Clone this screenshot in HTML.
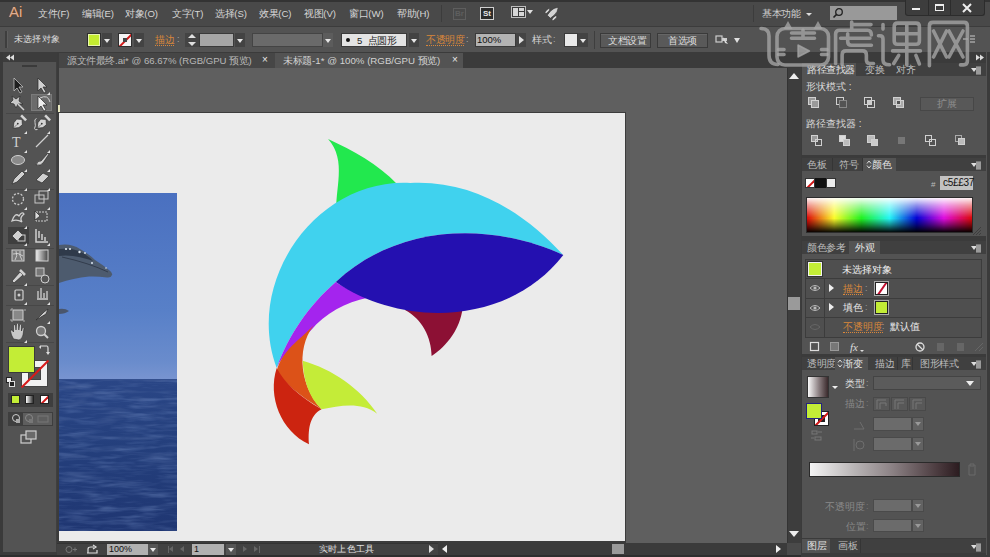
<!DOCTYPE html>
<html><head><meta charset="utf-8">
<style>
*{margin:0;padding:0;box-sizing:border-box}
html,body{width:990px;height:557px;overflow:hidden;background:#3b3b3b;font-family:"Liberation Sans",sans-serif;font-size:10px;color:#d8d8d8}
.a{position:absolute}
.t{position:absolute;white-space:nowrap;line-height:1;font-size:10px;color:#d6d6d6}
.dd{position:absolute;background:#434343}
.dd::after{content:"";position:absolute;left:50%;top:50%;margin-left:-3px;margin-top:-1.5px;border-left:3px solid transparent;border-right:3px solid transparent;border-top:4px solid #e6e6e6}
.tri-r{position:absolute;width:0;height:0;border-top:4px solid transparent;border-bottom:4px solid transparent;border-left:5px solid #e0e0e0}
.tri-l{position:absolute;width:0;height:0;border-top:4px solid transparent;border-bottom:4px solid transparent;border-right:5px solid #e0e0e0}
.tri-u{position:absolute;width:0;height:0;border-left:4px solid transparent;border-right:4px solid transparent;border-bottom:5px solid #e0e0e0}
.tri-d{position:absolute;width:0;height:0;border-left:4px solid transparent;border-right:4px solid transparent;border-top:5px solid #e0e0e0}
.or{color:#d9873a}
.btn{position:absolute;background:#595959;border:1px solid #3a3a3a;box-shadow:inset 0 1px 0 #666}
.ph{position:absolute;background:#3a3a3a}
.panel{position:absolute;background:#535353}
.tab{position:absolute;height:13px;font-size:10px;line-height:13px;color:#bdbdbd;white-space:nowrap;padding-left:5px}
.tab.on{background:#535353;color:#e4e4e4}
.pm{position:absolute;width:9px;height:7px}
.pm::before{content:"";position:absolute;left:0;top:2px;border-left:3px solid transparent;border-right:3px solid transparent;border-top:4px solid #ddd}
.pm::after{content:"";position:absolute;left:5px;top:0;width:5px;height:7px;background:#9a9a9a;border-top:1px solid #777;border-bottom:1px solid #777}
.c{display:inline-block;width:1em;text-align:center;font-style:normal}
</style></head><body>
<!-- MENU BAR -->
<div class="a" style="left:0;top:0;width:990px;height:26px;background:#494949;border-top:2px solid #333"></div>
<div class="t" style="left:9px;top:4px;font-size:15px;color:#dcae92;letter-spacing:0px;text-shadow:0 0 1px #7a4020,0 0 1px #7a4020">Ai</div>
<div class="t" style="left:38px;top:9px;font-size:9.6px"><i class="c">文</i><i class="c">件</i>(F)</div>
<div class="t" style="left:82px;top:9px;font-size:9.6px"><i class="c">编</i><i class="c">辑</i>(E)</div>
<div class="t" style="left:125px;top:9px;font-size:9.6px"><i class="c">对</i><i class="c">象</i>(O)</div>
<div class="t" style="left:172px;top:9px;font-size:9.6px"><i class="c">文</i><i class="c">字</i>(T)</div>
<div class="t" style="left:215px;top:9px;font-size:9.6px"><i class="c">选</i><i class="c">择</i>(S)</div>
<div class="t" style="left:259px;top:9px;font-size:9.6px"><i class="c">效</i><i class="c">果</i>(C)</div>
<div class="t" style="left:304px;top:9px;font-size:9.6px"><i class="c">视</i><i class="c">图</i>(V)</div>
<div class="t" style="left:349px;top:9px;font-size:9.6px"><i class="c">窗</i><i class="c">口</i>(W)</div>
<div class="t" style="left:397px;top:9px;font-size:9.6px"><i class="c">帮</i><i class="c">助</i>(H)</div>
<div class="a" style="left:441px;top:5px;width:1px;height:17px;background:#3c3c3c"></div>
<div class="a" style="left:453px;top:8px;width:13px;height:12px;border:1px solid #5e5e5e;color:#5e5e5e;font-size:8px;line-height:10px;text-align:center;font-weight:bold">Br</div>
<div class="a" style="left:480px;top:7px;width:14px;height:13px;border:1px solid #cfcfcf;background:#2c2c2c;color:#e6e6e6;font-size:8px;line-height:11px;text-align:center;font-weight:bold">St</div>
<div class="a" style="left:511px;top:6px;width:15px;height:12px;border:1px solid #bdbdbd;background:#3a3a3a"><div class="a" style="left:1px;top:1px;width:5px;height:8px;background:#d6d6d6"></div><div class="a" style="left:7px;top:1px;width:5px;height:3px;background:#d6d6d6"></div><div class="a" style="left:7px;top:5px;width:5px;height:4px;background:#d6d6d6"></div></div>
<div class="tri-d" style="left:527px;top:10px;border-width:4px 3px 0 3px"></div>
<svg class="a" style="left:540px;top:3px" width="22" height="20" viewBox="540 3 22 20"><g transform="translate(553 12.5) rotate(45)" fill="#d2d2d2" stroke="#2a2a2a" stroke-width="0.6"><path d="M0 -7.5 Q3 -4 2.8 1 L2.2 6 L-2.2 6 L-2.8 1 Q-3 -4 0 -7.5 Z"/><ellipse cx="-5" cy="3" rx="1.3" ry="3.2"/><ellipse cx="5" cy="3" rx="1.3" ry="3.2"/></g></svg>
<div class="a" style="left:753px;top:5px;width:1px;height:17px;background:#3c3c3c"></div>
<div class="t" style="left:762px;top:9px;font-size:9.5px;color:#cfcfcf"><i class="c">基</i><i class="c">本</i><i class="c">功</i><i class="c">能</i></div>
<div class="tri-d" style="left:806px;top:13px;border-width:3px 3px 0 3px;border-top-color:#ddd"></div>
<div class="a" style="left:830px;top:6px;width:67px;height:14px;background:#999"></div>
<svg class="a" style="left:832px;top:7px" width="12" height="12" viewBox="0 0 12 12"><circle cx="7" cy="5" r="3.3" fill="none" stroke="#222" stroke-width="1.3"/><path d="M4.6 7.4 L1.5 10.5" stroke="#222" stroke-width="1.6"/></svg>
<div class="a" style="left:905px;top:0;width:80px;height:16px;background:#3d3d3d;border:1px solid #2c2c2c;border-top:none;border-radius:0 0 3px 3px"></div>
<div class="a" style="left:928px;top:0;width:1px;height:15px;background:#2c2c2c"></div>
<div class="a" style="left:950px;top:0;width:1px;height:15px;background:#2c2c2c"></div>
<div class="a" style="left:912px;top:8px;width:8px;height:2px;background:#eee"></div>
<div class="a" style="left:935px;top:4px;width:9px;height:7px;border:1px solid #eee;border-top-width:2px"></div>
<svg class="a" style="left:962px;top:3px" width="10" height="10"><path d="M1 1 L9 9 M9 1 L1 9" stroke="#eee" stroke-width="2"/></svg>
<!-- CONTROL BAR -->
<div class="a" style="left:0;top:26px;width:990px;height:27px;background:#535353;border-top:1px solid #3c3c3c;border-bottom:1px solid #3c3c3c"></div>
<div class="a" style="left:5px;top:31px;width:3px;height:17px;background:#3e3e3e;border-right:1px solid #5e5e5e"></div>
<div class="t" style="left:14px;top:35px;font-size:9.2px;color:#dcdcdc"><i class="c">未</i><i class="c">选</i><i class="c">择</i><i class="c">对</i><i class="c">象</i></div>
<div class="a" style="left:87px;top:33px;width:14px;height:14px;background:#c4ec30;border:1px solid #2e2e2e;box-shadow:inset 0 0 0 1px #e8f5b0"></div>
<div class="dd" style="left:102px;top:33px;width:10px;height:14px"></div>
<div class="a" style="left:118px;top:33px;width:14px;height:14px;background:#f4f4f4;border:1px solid #2e2e2e;overflow:hidden"><div class="a" style="left:-3px;top:5px;width:20px;height:1.6px;background:#d01818;transform:rotate(-45deg)"></div><div class="a" style="left:4px;top:4px;width:4px;height:4px;background:#444"></div></div>
<div class="dd" style="left:134px;top:33px;width:10px;height:14px"></div>
<div class="t or" style="left:155px;top:35px;font-size:9.5px;border-bottom:1px dotted #d9873a"><i class="c">描</i><i class="c">边</i></div>
<div class="t" style="left:177px;top:35px;font-size:9px;color:#aaa">:</div>
<div class="a" style="left:185px;top:33px;width:14px;height:14px;background:#444"><div class="tri-u" style="left:3px;top:1px;border-width:0 4px 4px 4px"></div><div class="tri-d" style="left:3px;top:9px;border-width:4px 4px 0 4px"></div></div>
<div class="a" style="left:199px;top:33px;width:35px;height:14px;background:#a6a6a6;border:1px solid #3a3a3a"></div>
<div class="dd" style="left:235px;top:33px;width:10px;height:14px"></div>
<div class="a" style="left:252px;top:33px;width:71px;height:14px;background:#6a6a6a;border:1px solid #444"></div>
<div class="dd" style="left:323px;top:33px;width:10px;height:14px;background:#5c5c5c"></div>
<div class="a" style="left:341px;top:33px;width:66px;height:14px;background:#e3e3e3;border:1px solid #3a3a3a"></div>
<div class="a" style="left:346px;top:38px;width:4px;height:4px;border-radius:50%;background:#111"></div>
<div class="t" style="left:357px;top:36px;font-size:9.5px;color:#222">5&nbsp;&nbsp;<i class="c">点</i><i class="c">圆</i><i class="c">形</i></div>
<div class="dd" style="left:409px;top:33px;width:10px;height:14px"></div>
<div class="t or" style="left:426px;top:35px;font-size:9.5px;border-bottom:1px dotted #d9873a"><i class="c">不</i><i class="c">透</i><i class="c">明</i><i class="c">度</i></div>
<div class="t" style="left:466px;top:35px;font-size:9px;color:#aaa">:</div>
<div class="a" style="left:475px;top:33px;width:41px;height:14px;background:#b3b3b3;border:1px solid #3a3a3a"></div>
<div class="t" style="left:477px;top:35px;font-size:9.5px;color:#111">100%</div>
<div class="a" style="left:516px;top:33px;width:10px;height:14px;background:#444"><div class="tri-r" style="left:3px;top:3px;border-width:4px 0 4px 5px"></div></div>
<div class="t" style="left:532px;top:35px;font-size:9.5px;color:#d6d6d6"><i class="c">样</i><i class="c">式</i></div>
<div class="t" style="left:553px;top:35px;font-size:9px;color:#aaa">:</div>
<div class="a" style="left:564px;top:33px;width:14px;height:14px;background:#e9e9e9;border:1px solid #3a3a3a"></div>
<div class="dd" style="left:578px;top:33px;width:10px;height:14px"></div>
<div class="a" style="left:594px;top:31px;width:1px;height:18px;background:#3e3e3e"></div>
<div class="btn" style="left:600px;top:33px;width:51px;height:15px"></div>
<div class="t" style="left:608px;top:36px;font-size:9.5px;color:#dedede"><i class="c">文</i><i class="c">档</i><i class="c">设</i><i class="c">置</i></div>
<div class="btn" style="left:657px;top:33px;width:51px;height:15px"></div>
<div class="t" style="left:668px;top:36px;font-size:9.5px;color:#dedede"><i class="c">首</i><i class="c">选</i><i class="c">项</i></div>
<svg class="a" style="left:715px;top:33px" width="16" height="14" viewBox="0 0 16 14"><rect x="1" y="3" width="6" height="6" fill="none" stroke="#ccc" stroke-width="1.2"/><rect x="7" y="5" width="5" height="3" fill="#ccc"/><path d="M8 4 L13 11 L10 10 Z" fill="#ddd"/></svg>
<div class="tri-d" style="left:734px;top:38px;border-width:5px 3.5px 0 3.5px"></div>
<svg class="a" style="left:962px;top:35px" width="14" height="10" viewBox="0 0 14 10"><path d="M1 4 L6 4 M8 1 L13 1 M8 4 L13 4 M8 7 L13 7" stroke="#ccc" stroke-width="1"/></svg>
<!-- TOOLS -->
<div class="a" style="left:0;top:52px;width:3px;height:505px;background:#3a3a3a"></div>
<div class="a" style="left:3px;top:52px;width:54px;height:500px;background:#535353;border-right:1px solid #3f3f3f"></div>
<div class="a" style="left:3px;top:52px;width:54px;height:10px;background:#3c3c3c"></div>
<svg class="a" style="left:6px;top:54px" width="9" height="7"><path d="M0 3.5 L4 0.5 L4 6.5 Z M4 3.5 L8 0.5 L8 6.5 Z" fill="#ddd"/></svg>
<div class="a" style="left:22px;top:65px;width:15px;height:2px;background:#3a3a3a"></div>
<div class="a" style="left:31px;top:94px;width:21px;height:17px;background:#6b6b6b;border:1px solid #7a7a7a"></div>
<div class="a" style="left:8px;top:227px;width:21px;height:17px;background:#3f3f3f"></div>
<div class="a" style="left:6px;top:113px;width:48px;height:1px;background:#474747"></div>
<div class="a" style="left:6px;top:189px;width:48px;height:1px;background:#474747"></div>
<div class="a" style="left:6px;top:248px;width:48px;height:1px;background:#474747"></div>
<div class="a" style="left:6px;top:285px;width:48px;height:1px;background:#474747"></div>
<div class="a" style="left:6px;top:305px;width:48px;height:1px;background:#474747"></div>
<div class="a" style="left:6px;top:342px;width:48px;height:1px;background:#474747"></div>
<svg class="a" style="left:0;top:0" width="60" height="557" viewBox="0 0 60 557">
<g fill="#d0d0d0" stroke="#2a2a2a" stroke-width="0.7">
<!-- row1 -->
<path d="M14 78 L14 91 L17 88 L20 93 L22 92 L19 87 L23 87 Z" fill="#1e1e1e" stroke="#d0d0d0"/>
<path d="M38 78 L38 91 L41 88 L44 93 L46 92 L43 87 L47 87 Z"/>
<!-- row2 -->
<path d="M12 96 L16 99 L20 96 L19 101 L23 104 L18 104 L16 108 L14 104 L10 103 L13 100 Z" fill="#c8c8c8"/>
<path d="M18 104 L24 110" stroke="#cfcfcf" stroke-width="1.5"/>
<path d="M38 96 L38 109 L41 106 L44 111 L46 110 L43 105 L47 105 Z" fill="#eee"/>
<path d="M40 98 Q48 94 50 102" fill="none" stroke="#cfcfcf" stroke-width="1"/>
<!-- row3 pen -->
<g transform="translate(18.5 123) rotate(45)"><path d="M0 -5 L4 -1.5 L3.5 3 L0 7.5 L-3.5 3 L-4 -1.5 Z" fill="#d4d4d4" stroke="#2a2a2a" stroke-width="0.6"/><rect x="-3.5" y="-8.5" width="7" height="2.5" fill="#d4d4d4" stroke="none"/><circle cx="0" cy="1" r="0.9" fill="#333" stroke="none"/><path d="M0 2 L0 7" stroke="#444" stroke-width="0.6"/></g>
<g transform="translate(42.5 123) rotate(45)"><path d="M0 -5 L4 -1.5 L3.5 3 L0 7.5 L-3.5 3 L-4 -1.5 Z" fill="#d4d4d4" stroke="#2a2a2a" stroke-width="0.6"/><rect x="-3.5" y="-8.5" width="7" height="2.5" fill="#d4d4d4" stroke="none"/><circle cx="0" cy="1" r="0.9" fill="#333" stroke="none"/><path d="M0 2 L0 7" stroke="#444" stroke-width="0.6"/></g>
<path d="M36.5 118.5 Q34 119 35 122.5 Q36 126 34.5 128.5 Q35 130.5 37.5 129.5" fill="none" stroke="#d0d0d0" stroke-width="1"/>
<!-- row4 T and line -->
<text x="12" y="147" font-family="Liberation Serif" font-size="14" fill="#d0d0d0" stroke="none">T</text>
<path d="M36 147 L48 135" stroke="#d0d0d0" stroke-width="1.3"/>
<!-- row5 ellipse brush -->
<ellipse cx="18" cy="160" rx="6.5" ry="4.5" fill="#8a8a8a" stroke="#d0d0d0" stroke-width="1"/>
<path d="M36 165 Q38 160 41 161 L48 153 L49 154 L43 163 Q41 166 36 165 Z"/>
<!-- row6 pencil eraser -->
<path d="M12 184 L14 179 L22 171 L25 174 L17 182 Z"/>
<path d="M36 180 L43 173 L49 176 L42 183 Z"/>
<!-- row7 rotate scale -->
<circle cx="18" cy="199" r="5.5" fill="none" stroke="#c8c8c8" stroke-width="1.3" stroke-dasharray="2 1.5"/>
<rect x="35" y="195" width="9" height="8" fill="none" stroke="#c8c8c8" stroke-width="1"/>
<rect x="39" y="191" width="9" height="8" fill="none" stroke="#c8c8c8" stroke-width="1"/>
<!-- row8 warp, free transform -->
<path d="M12 221 Q15 212 19 216 Q22 211 24 214 Q19 218 22 222 Q17 219 12 221 Z" fill="none" stroke="#cfcfcf" stroke-width="1.3"/>
<rect x="36" y="212" width="11" height="9" fill="none" stroke="#cfcfcf" stroke-width="1" stroke-dasharray="2 1"/>
<path d="M35 211 L40 216 L35 220 Z" fill="#ddd"/>
<!-- row9 live paint bucket, graph -->
<path d="M12 236 L18 230 L23 235 L17 241 Z"/>
<rect x="18" y="235" width="7" height="6" fill="none" stroke="#cfcfcf" stroke-width="1"/>
<path d="M36 229 L36 242 L48 242 M39 238 L39 231 M42 240 L42 234 M45 241 L45 237" stroke="#cfcfcf" stroke-width="1.5" fill="none"/>
<!-- row10 mesh gradient -->
<rect x="12" y="250" width="12" height="11" fill="#7a7a7a" stroke="#d0d0d0" stroke-width="1"/>
<path d="M13 254 Q18 252 23 256 M16 251 Q18 256 15 260 M20 251 Q19 256 22 260" stroke="#e0e0e0" stroke-width="0.8" fill="none"/>
<defs><linearGradient id="tg"><stop offset="0" stop-color="#eee"/><stop offset="1" stop-color="#444"/></linearGradient></defs><rect x="36" y="250" width="12" height="11" fill="url(#tg)" stroke="#cfcfcf" stroke-width="1"/>
<!-- row11 eyedropper blend -->
<path d="M12 281 L20 272 L23 275 L14 283 Z"/>
<path d="M20 270 L25 275" stroke="#d0d0d0" stroke-width="2.5"/>
<rect x="36" y="268" width="8" height="8" fill="#777" stroke="#cfcfcf" stroke-width="1"/>
<circle cx="45" cy="279" r="4" fill="#555" stroke="#cfcfcf" stroke-width="1"/>
<!-- row12 symbol sprayer, column graph -->
<rect x="15" y="290" width="8" height="10" rx="1" fill="none" stroke="#cfcfcf" stroke-width="1.2"/>
<circle cx="19" cy="295" r="1.5" fill="#cfcfcf" stroke="none"/>
<path d="M37 299 L48 299 M38 298 L38 291 M41 298 L41 288 M44 298 L44 293 M47 298 L47 291" stroke="#cfcfcf" stroke-width="1.3" fill="none"/>
<!-- row13 artboard slice -->
<rect x="13" y="310" width="10" height="10" fill="#888" stroke="#cfcfcf" stroke-width="1"/>
<path d="M11 311 L11 309 L13 309 M25 309 L25 311 M11 319 L11 321 L13 321 M25 321 L23 321" stroke="#cfcfcf" fill="none"/>
<path d="M36 320 L44 312 L48 309 L46 314 Z"/>
<!-- row14 hand zoom -->
<path d="M13.5 339 Q11 335 10.5 331 Q10.5 329.5 12 330 L13.5 332 L13.5 325.5 Q14.5 324 15.5 325.5 L16 330 L16.5 324 Q17.5 322.5 18.5 324 L18.8 330 L19.5 325 Q20.5 323.5 21.5 325 L21.5 331 L22.5 327.5 Q23.8 326.8 24 328.5 L23 335 Q22 339.5 19 340 Z" fill="#c8c8c8" stroke="#2a2a2a" stroke-width="0.6"/>
<circle cx="41" cy="331" r="4.5" fill="#777" stroke="#cfcfcf" stroke-width="1.3"/>
<path d="M44 334 L48 338" stroke="#cfcfcf" stroke-width="2"/>
</g>
<g fill="#e0e0e0">
<path d="M50 92 L50 95 L47 95 Z"/><path d="M27 131 L27 134 L24 134 Z"/><path d="M50 131 L50 134 L47 134 Z"/>
<path d="M27 150 L27 153 L24 153 Z"/><path d="M50 150 L50 153 L47 153 Z"/><path d="M27 169 L27 172 L24 172 Z"/><path d="M50 169 L50 172 L47 172 Z"/>
<path d="M27 188 L27 191 L24 191 Z"/><path d="M50 188 L50 191 L47 191 Z"/><path d="M27 207 L27 210 L24 210 Z"/><path d="M50 207 L50 210 L47 210 Z"/>
<path d="M27 226 L27 229 L24 229 Z"/><path d="M27 243 L27 246 L24 246 Z"/><path d="M50 243 L50 246 L47 246 Z"/>
<path d="M27 283 L27 286 L24 286 Z"/><path d="M27 302 L27 305 L24 305 Z"/><path d="M50 302 L50 305 L47 305 Z"/><path d="M50 321 L50 324 L47 324 Z"/><path d="M27 340 L27 343 L24 343 Z"/>
</g>
</svg>
<!-- fill / stroke -->
<div class="a" style="left:21px;top:360px;width:27px;height:27px;background:#f2f2f2;border:1px solid #444"><div class="a" style="left:6px;top:6px;width:13px;height:13px;background:#535353;border:1px solid #444"></div><div class="a" style="left:-6px;top:12px;width:38px;height:2px;background:#d81a1a;transform:rotate(-45deg)"></div></div>
<div class="a" style="left:8px;top:346px;width:27px;height:27px;background:#c3ed36;border:1px solid #3a3a3a"></div>
<svg class="a" style="left:38px;top:344px" width="12" height="12" viewBox="0 0 12 12"><path d="M3 2 L9 2 Q10 2 10 4 L10 9" fill="none" stroke="#ddd" stroke-width="1.2"/><path d="M1 3 L3 1 L3 5 Z M8 8 L12 8 L10 11 Z" fill="#ddd"/></svg>
<div class="a" style="left:6px;top:377px;width:6px;height:6px;background:#f0f0f0;border:1px solid #222"></div>
<div class="a" style="left:9px;top:381px;width:6px;height:6px;background:#222;border:1px solid #ddd"></div>
<div class="a" style="left:8px;top:393px;width:45px;height:14px;background:#3e3e3e"></div>
<div class="a" style="left:11px;top:395px;width:9px;height:9px;background:#c3ed36;border:1px solid #222"></div>
<div class="a" style="left:25px;top:395px;width:9px;height:9px;background:linear-gradient(90deg,#fff,#333);border:1px solid #222"></div>
<div class="a" style="left:40px;top:395px;width:9px;height:9px;background:#fff;border:1px solid #222;overflow:hidden"><div class="a" style="left:-3px;top:3px;width:14px;height:1.5px;background:#d01818;transform:rotate(-45deg)"></div></div>
<div class="a" style="left:8px;top:412px;width:45px;height:14px;background:#3e3e3e"></div>
<div class="a" style="left:23px;top:413px;width:29px;height:12px;background:#5e5e5e"></div>
<svg class="a" style="left:9px;top:412px" width="44" height="14" viewBox="0 0 44 14"><circle cx="7" cy="6" r="3.5" fill="none" stroke="#ccc"/><rect x="7" y="7" width="4" height="4" fill="#aaa"/><circle cx="20" cy="6" r="3.5" fill="none" stroke="#888"/><rect x="20" y="7" width="4" height="4" fill="#777"/><rect x="29" y="4" width="10" height="6" fill="none" stroke="#777"/></svg>
<svg class="a" style="left:20px;top:430px" width="18" height="14" viewBox="0 0 18 14"><rect x="1" y="5" width="10" height="8" fill="none" stroke="#cfcfcf" stroke-width="1.2"/><rect x="6" y="1" width="10" height="8" fill="#6a6a6a" stroke="#cfcfcf" stroke-width="1.2"/></svg>
<!-- DOC TABS -->
<div class="a" style="left:57px;top:52px;width:744px;height:16px;background:#3b3b3b"></div>
<div class="a" style="left:59px;top:53px;width:216px;height:15px;background:#464646"></div>
<div class="t" style="left:67px;top:56px;font-size:9.6px;color:#b8b8b8"><i class="c">源</i><i class="c">文</i><i class="c">件</i><i class="c">最</i><i class="c">终</i>.ai* @ 66.67% (RGB/GPU <i class="c">预</i><i class="c">览</i>)</div>
<div class="t" style="left:262px;top:55px;font-size:10px;color:#e8e8e8">×</div>
<div class="a" style="left:275px;top:53px;width:188px;height:15px;background:#535353"></div>
<div class="t" style="left:283px;top:56px;font-size:9.7px;color:#d2d2d2"><i class="c">未</i><i class="c">标</i><i class="c">题</i>-1* @ 100% (RGB/GPU <i class="c">预</i><i class="c">览</i>)</div>
<div class="t" style="left:452px;top:55px;font-size:10px;color:#e8e8e8">×</div>
<!-- CANVAS -->
<div class="a" style="left:59px;top:68px;width:728px;height:475px;background:#5f5f5f;overflow:hidden">
  <div class="a" style="left:-40px;top:44px;width:607px;height:432px;background:#3c3c3c"></div>
  <div class="a" style="left:-40px;top:45px;width:606px;height:428px;background:#ebebeb"></div>
  <div class="a" style="left:0;top:125px;width:118px;height:338px;background:linear-gradient(#4a70c0,#5880c8 35%,#6a8ccc 50%,#7894d0 55%,#2a4686 55.2%,#243f7c 75%,#1f3672)"></div>
  <svg class="a" style="left:0;top:312px" width="118" height="151" viewBox="0 0 118 151"><defs><filter id="wv" x="0" y="0" width="100%" height="100%"><feTurbulence type="fractalNoise" baseFrequency="0.03 0.22" numOctaves="3" seed="7"/><feColorMatrix type="matrix" values="0 0 0 0 0.35  0 0 0 0 0.5  0 0 0 0 0.85  0 0 0 -2.5 1.3"/></filter><filter id="wv2" x="0" y="0" width="100%" height="100%"><feTurbulence type="fractalNoise" baseFrequency="0.025 0.18" numOctaves="3" seed="3"/><feColorMatrix type="matrix" values="0 0 0 0 0.08  0 0 0 0 0.14  0 0 0 0 0.35  0 0 0 2.6 -1.25"/></filter></defs><rect width="118" height="151" filter="url(#wv2)" opacity="0.6"/><rect width="118" height="151" filter="url(#wv)" opacity="0.22"/></svg>
  <svg class="a" style="left:0;top:0" width="729" height="475" viewBox="0 0 729 475">
    <path d="M0 177 Q12 175 21 181 Q30 186 36 192 Q44 197 50 202 Q54 205 53 207 Q52 210 48 209.5 Q38 208 30 208.5 Q14 210 0 215 Z" fill="#4d5b6e"/>
    <path d="M0 181 Q12 180 20 183 Q30 188 34 193 Q26 190 14 188 Q6 187 0 188 Z" fill="#2f3a4a"/>
    <path d="M3 189 Q30 195 49 204" stroke="#323c4c" stroke-width="1" fill="none"/>
    <circle cx="7" cy="181" r="1.1" fill="#e6eef6"/><circle cx="11" cy="181" r="1" fill="#e6eef6"/><circle cx="20.5" cy="184" r="1.2" fill="#e6eef6"/><circle cx="26" cy="185" r="0.9" fill="#dde6f0"/><circle cx="33" cy="195" r="1" fill="#dde6f0"/><circle cx="47" cy="200" r="0.8" fill="#dde6f0"/>
    <path d="M0 241 Q6 240 10 243 Q6 246 0 246 Z" fill="#4a566c"/>
  </svg>
</div>
<svg class="a" style="left:0;top:68px;width:787px;height:475px;overflow:hidden" width="787" height="475" viewBox="0 68 787 475">
<!--SHARK-->
<path fill="#22e84e" d="M328.1,138.9C352.9,150.5 378.0,163.8 397.0,184.0L336.5,215.0C334.2,189.5 347.6,161.0 328.1,138.9Z"/>
<path fill="#40d2ee" d="M563.3,255.1C523.5,211.6 471.7,179.6 410.3,182.9C316.2,177.9 244.0,281.5 276.7,368.0C288.5,335.0 309.3,304.9 335.8,282.0C396.9,224.6 489.5,220.9 563.3,255.1Z"/>
<path fill="#a424ee" d="M335.8,282.0C340.5,285.7 351.1,290.9 367.7,297.8C346.0,302.3 325.1,313.3 310.8,330.4C299.5,342.6 283.3,351.9 276.7,368.0C288.5,335.0 309.3,304.9 335.8,282.0Z"/>
<path fill="#dc5218" d="M313.5,325.6C300.3,339.4 281.0,351.4 276.7,371.5C284.4,382.9 299.4,395.5 321.6,409.2C301.1,387.9 295.0,350.2 313.5,325.6Z"/>
<path fill="#cc2410" d="M276.7,368.0C284.4,382.9 299.4,396.7 321.6,409.2C308.6,415.3 308.1,432.4 309.0,444.3C281.0,431.0 267.4,396.9 276.7,368.0Z"/>
<path fill="#c4ec38" d="M302.7,360.8C332.2,369.2 359.9,388.2 377.2,413.7C360.4,401.2 340.0,405.9 321.6,409.2C308.1,397.1 303.4,378.2 302.7,360.8Z"/>
<path fill="#8c1034" d="M405.0,310.1C421.9,318.8 431.4,337.5 431.6,356.0C447.8,345.6 460.0,328.2 462.5,309.0L405.0,310.1Z"/>
<path fill="#2410b0" d="M335.8,282.0C396.9,224.6 489.5,220.9 563.3,255.1C510.4,324.0 404.5,329.1 335.8,282.0Z"/>
<!--/SHARK-->
</svg>
<!-- small ruler origin mark -->
<div class="a" style="left:58px;top:105px;width:2px;height:7px;background:#e8e8c0"></div>
<!-- V SCROLL -->
<div class="a" style="left:787px;top:68px;width:14px;height:475px;background:#3d3d3d;border-left:1px solid #333"></div>
<div class="tri-u" style="left:789px;top:73px;border-width:0 5px 6px 5px;border-bottom-color:#eee"></div>
<div class="a" style="left:788px;top:297px;width:12px;height:13px;background:#9a9a9a"></div>
<div class="tri-d" style="left:789px;top:531px;border-width:6px 5px 0 5px;border-top-color:#eee"></div>
<!-- STATUS BAR -->
<div class="a" style="left:57px;top:543px;width:744px;height:12px;background:#424242;border-top:1px solid #333"></div>
<div class="a" style="left:0;top:555px;width:990px;height:2px;background:#2e2e2e"></div>
<svg class="a" style="left:63px;top:544px" width="40" height="11" viewBox="0 0 40 11"><circle cx="6" cy="5.5" r="3" fill="none" stroke="#777" stroke-width="1"/><path d="M10 5.5 L14 5.5 M12 3.5 L12 7.5" stroke="#777"/><path d="M25 9 L25 5 Q25 3 28 3 L31 3 M30 1 L33 3 L30 5 M24 9 L34 9 L34 6" stroke="#ddd" fill="none" stroke-width="1.2"/></svg>
<div class="a" style="left:107px;top:544px;width:41px;height:11px;background:#b1b1b1"></div>
<div class="t" style="left:109px;top:545px;font-size:9px;color:#111">100%</div>
<div class="dd" style="left:148px;top:544px;width:10px;height:11px;background:#555"></div>
<div class="a" style="left:168px;top:546px;width:1px;height:7px;background:#666"></div>
<div class="tri-l" style="left:169px;top:546px;border-width:3.5px 4px 3.5px 0;border-right-color:#666"></div>
<div class="tri-l" style="left:180px;top:546px;border-width:3.5px 4px 3.5px 0;border-right-color:#666"></div>
<div class="a" style="left:192px;top:544px;width:32px;height:11px;background:#b1b1b1"></div>
<div class="t" style="left:194px;top:545px;font-size:9px;color:#111">1</div>
<div class="dd" style="left:226px;top:544px;width:10px;height:11px;background:#555"></div>
<div class="tri-r" style="left:243px;top:546px;border-width:3.5px 0 3.5px 4px;border-left-color:#666"></div>
<div class="tri-r" style="left:254px;top:546px;border-width:3.5px 0 3.5px 4px;border-left-color:#666"></div>
<div class="a" style="left:259px;top:546px;width:1px;height:7px;background:#666"></div>
<div class="t" style="left:319px;top:545px;font-size:9.2px;color:#e0e0e0"><i class="c">实</i><i class="c">时</i><i class="c">上</i><i class="c">色</i><i class="c">工</i><i class="c">具</i></div>
<div class="tri-r" style="left:429px;top:545px;border-width:4px 0 4px 5px;border-left-color:#ddd"></div>
<div class="a" style="left:438px;top:543px;width:349px;height:12px;background:#3b3b3b"></div>
<div class="tri-l" style="left:442px;top:545px;border-width:4px 5px 4px 0;border-right-color:#eee"></div>
<div class="a" style="left:612px;top:544px;width:12px;height:10px;background:#9a9a9a"></div>
<div class="tri-r" style="left:776px;top:545px;border-width:4px 0 4px 5px;border-left-color:#eee"></div>
<div class="a" style="left:787px;top:543px;width:14px;height:12px;background:#4a4a4a"></div>
<!-- RIGHT DOCK -->
<div class="a" style="left:801px;top:52px;width:189px;height:505px;background:#3b3b3b"></div>
<div class="a" style="left:986px;top:52px;width:1px;height:503px;background:#555"></div>
<svg class="a" style="left:976px;top:54px" width="9" height="7"><path d="M0 0.5 L4 3.5 L0 6.5 Z M4 0.5 L8 3.5 L4 6.5 Z" fill="#ddd"/></svg>
<!-- panel 1 pathfinder -->
<div class="a" style="left:802px;top:63px;width:184px;height:13px;background:#404040"></div>
<div class="tab on" style="left:802px;top:63px;width:54px;font-size:9.5px"><i class="c">路</i><i class="c">径</i><i class="c">查</i><i class="c">找</i><i class="c">器</i></div>
<div class="tab" style="left:860px;top:63px;font-size:9.5px"><i class="c">变</i><i class="c">换</i></div>
<div class="tab" style="left:891px;top:63px;font-size:9.5px"><i class="c">对</i><i class="c">齐</i></div>
<div class="pm" style="left:971px;top:66px"></div>
<div class="panel" style="left:802px;top:76px;width:184px;height:79px"></div>
<div class="t" style="left:806px;top:82px;font-size:10px;color:#dadada"><i class="c">形</i><i class="c">状</i><i class="c">模</i><i class="c">式</i> :</div>
<svg class="a" style="left:802px;top:94px" width="182" height="60" viewBox="804 94 182 60">
<g fill="none" stroke="#d0d0d0" stroke-width="1">
<rect x="810.5" y="97.5" width="7" height="7" fill="#999"/><rect x="813.5" y="100.5" width="7" height="7" fill="#999"/>
<rect x="838.5" y="97.5" width="7" height="7"/><rect x="841.5" y="100.5" width="7" height="7" fill="#535353" stroke="#888"/>
<rect x="866.5" y="97.5" width="7" height="7"/><rect x="869.5" y="100.5" width="7" height="7"/><rect x="869.5" y="100.5" width="4" height="4" fill="#ccc"/>
<rect x="895.5" y="97.5" width="7" height="7" fill="#aaa"/><rect x="898.5" y="100.5" width="7" height="7" fill="#aaa"/><rect x="898.5" y="100.5" width="4" height="4" fill="#535353"/>
<rect x="813.5" y="135.5" width="6" height="6" fill="#999"/><rect x="817.5" y="139.5" width="6" height="6"/>
<rect x="841.5" y="135.5" width="6" height="6" fill="#ddd"/><rect x="845.5" y="139.5" width="6" height="6" fill="#bbb"/>
<rect x="869.5" y="135.5" width="7" height="7" fill="#bbb"/><rect x="873.5" y="139.5" width="6" height="6" fill="#ccc"/>
<rect x="900.5" y="137.5" width="6" height="6" fill="#777" stroke="#777"/>
<rect x="927.5" y="135.5" width="6" height="6"/><rect x="931.5" y="139.5" width="6" height="6"/>
<rect x="957.5" y="135.5" width="6" height="6" stroke="#aaa"/><rect x="960.5" y="138.5" width="6" height="6" fill="#bbb"/>
</g>
</svg>
<div class="a" style="left:920px;top:97px;width:54px;height:14px;background:#585858;border:1px solid #474747"></div>
<div class="t" style="left:937px;top:99px;font-size:10px;color:#8d8d8d"><i class="c">扩</i><i class="c">展</i></div>
<div class="t" style="left:806px;top:119px;font-size:10px;color:#dadada"><i class="c">路</i><i class="c">径</i><i class="c">查</i><i class="c">找</i><i class="c">器</i> :</div>
<!-- panel 2 color -->
<div class="a" style="left:802px;top:158px;width:184px;height:13px;background:#404040"></div>
<div class="tab" style="left:802px;top:158px;width:28px;font-size:9.5px"><i class="c">色</i><i class="c">板</i></div>
<div class="a" style="left:832px;top:158px;width:1px;height:13px;background:#353535"></div>
<div class="tab" style="left:834px;top:158px;font-size:9.5px"><i class="c">符</i><i class="c">号</i></div>
<div class="a" style="left:862px;top:158px;width:1px;height:13px;background:#353535"></div>
<div class="tab on" style="left:863px;top:158px;width:33px;padding-left:3px;font-size:9.5px"><span style="display:inline-block;width:6px;height:9px;vertical-align:-1px;position:relative"><svg style="position:absolute;left:0;top:0" width="6" height="9"><path d="M1 3.5 L3 1 L5 3.5 M1 5.5 L3 8 L5 5.5" fill="none" stroke="#ddd" stroke-width="1"/></svg></span><i class="c">颜</i><i class="c">色</i></div>
<div class="pm" style="left:971px;top:161px"></div>
<div class="panel" style="left:802px;top:171px;width:184px;height:65px"></div>
<div class="a" style="left:805px;top:178px;width:10px;height:10px;background:#fff;border:1px solid #333;overflow:hidden"><div class="a" style="left:-3px;top:3.5px;width:16px;height:1.5px;background:#d01818;transform:rotate(-45deg)"></div></div>
<div class="a" style="left:815px;top:178px;width:11px;height:10px;background:#111"></div>
<div class="a" style="left:826px;top:178px;width:10px;height:10px;background:#ececec;border:1px solid #333"></div>
<div class="t" style="left:931px;top:181px;font-size:8px;color:#bbb">#</div>
<div class="a" style="left:940px;top:176px;width:33px;height:14px;background:#c2c2c2"></div>
<div class="t" style="left:943px;top:178px;font-size:10px;color:#111;letter-spacing:-0.3px">c5££37</div>
<div class="a" style="left:806px;top:197px;width:167px;height:36px;border:1px solid #2c2c2c;background:linear-gradient(180deg,rgba(255,255,255,.95) 0%,rgba(255,255,255,.55) 22%,rgba(255,255,255,0) 58%,rgba(0,0,0,0) 60%,rgba(0,0,0,.45) 80%,rgba(0,0,0,.95) 100%),linear-gradient(90deg,#f00 0%,#ff0 16.5%,#0f0 33%,#0ff 50%,#00f 66.5%,#f0f 83%,#f00 100%);filter:saturate(.82)"></div>
<svg class="a" style="left:972px;top:226px" width="10" height="10"><path d="M1 9 L9 1 M4 9 L9 4 M7 9 L9 7" stroke="#3e3e3e"/></svg>
<!-- panel 3 appearance -->
<div class="a" style="left:802px;top:241px;width:184px;height:13px;background:#404040"></div>
<div class="tab" style="left:802px;top:241px;width:45px;font-size:9.5px"><i class="c">颜</i><i class="c">色</i><i class="c">参</i><i class="c">考</i></div>
<div class="tab on" style="left:849px;top:241px;width:31px;padding-left:6px;font-size:9.5px"><i class="c">外</i><i class="c">观</i></div>
<div class="pm" style="left:971px;top:244px"></div>
<div class="panel" style="left:802px;top:254px;width:184px;height:100px"></div>
<div class="a" style="left:805px;top:259px;width:177px;height:79px;background:#4f4f4f;border:1px solid #3c3c3c"></div>
<div class="a" style="left:806px;top:278px;width:175px;height:1px;background:#3c3c3c"></div>
<div class="a" style="left:806px;top:298px;width:175px;height:1px;background:#3c3c3c"></div>
<div class="a" style="left:806px;top:317px;width:175px;height:1px;background:#3c3c3c"></div>
<div class="a" style="left:824px;top:279px;width:1px;height:58px;background:#3c3c3c"></div>
<div class="a" style="left:808px;top:262px;width:14px;height:14px;background:#c3ed36;border:1px solid #f0f0f0;box-shadow:0 0 0 1px #333"></div>
<div class="t" style="left:842px;top:265px;font-size:10px;color:#f0f0f0"><i class="c">未</i><i class="c">选</i><i class="c">择</i><i class="c">对</i><i class="c">象</i></div>
<svg class="a" style="left:808px;top:282px" width="16" height="52" viewBox="0 0 16 52"><g fill="none" stroke="#bbb" stroke-width="1"><path d="M2 6 Q7 1 12 6 Q7 11 2 6 Z"/><path d="M2 26 Q7 21 12 26 Q7 31 2 26 Z"/><path d="M2 45 Q7 40 12 45 Q7 50 2 45 Z" stroke="#666"/></g><circle cx="7" cy="6" r="1.6" fill="#bbb"/><circle cx="7" cy="26" r="1.6" fill="#bbb"/></svg>
<div class="tri-r" style="left:829px;top:284px;border-width:4px 0 4px 5px;border-left-color:#eee"></div>
<div class="tri-r" style="left:829px;top:303px;border-width:4px 0 4px 5px;border-left-color:#eee"></div>
<div class="t or" style="left:843px;top:284px;font-size:10px;border-bottom:1px dotted #d9873a"><i class="c">描</i><i class="c">边</i></div>
<div class="t" style="left:865px;top:284px;font-size:9px;color:#999">:</div>
<div class="a" style="left:875px;top:282px;width:13px;height:13px;background:#fff;border:1px solid #222;box-shadow:0 0 0 1px #aaa;overflow:hidden"><div class="a" style="left:-3px;top:4.5px;width:18px;height:2px;background:#c01030;transform:rotate(-55deg)"></div></div>
<div class="t" style="left:843px;top:303px;font-size:10px;color:#e6e6e6"><i class="c">填</i><i class="c">色</i></div>
<div class="t" style="left:865px;top:303px;font-size:9px;color:#999">:</div>
<div class="a" style="left:875px;top:301px;width:13px;height:13px;background:#c3ed36;border:1px solid #222;box-shadow:0 0 0 1px #aaa"></div>
<div class="t or" style="left:843px;top:322px;font-size:10px;border-bottom:1px dotted #d9873a"><i class="c">不</i><i class="c">透</i><i class="c">明</i><i class="c">度</i></div>
<div class="t" style="left:882px;top:322px;font-size:9px;color:#999">:</div>
<div class="t" style="left:890px;top:322px;font-size:10px;color:#eaeaea"><i class="c">默</i><i class="c">认</i><i class="c">值</i></div>
<svg class="a" style="left:806px;top:341px" width="180" height="12" viewBox="806 341 180 12"><rect x="810.5" y="342.5" width="8" height="8" fill="none" stroke="#ddd" stroke-width="1.2"/><rect x="830.5" y="342.5" width="8" height="8" fill="#777" stroke="#999"/><text x="850" y="351" font-family="Liberation Serif" font-style="italic" font-size="11" fill="#ddd">fx</text><path d="M860 350 L864 350 L862 352 Z" fill="#ddd"/><circle cx="920" cy="347" r="4" fill="none" stroke="#ddd" stroke-width="1.3"/><path d="M917 344 L923 350" stroke="#ddd" stroke-width="1.3"/><rect x="937" y="343" width="7" height="8" fill="#666"/><rect x="957" y="343" width="7" height="8" fill="#666"/><path d="M975 351 L983 343 M979 351 L983 347" stroke="#666"/></svg>
<!-- panel 4 gradient -->
<div class="a" style="left:802px;top:357px;width:184px;height:13px;background:#404040"></div>
<div class="tab" style="left:802px;top:357px;width:31px;font-size:9.5px"><i class="c">透</i><i class="c">明</i><i class="c">度</i></div>
<div class="tab on" style="left:835px;top:357px;width:33px;padding-left:2px;font-size:9.5px"><span style="display:inline-block;width:6px;height:9px;vertical-align:-1px;position:relative"><svg style="position:absolute;left:0;top:0" width="6" height="9"><path d="M1 3.5 L3 1 L5 3.5 M1 5.5 L3 8 L5 5.5" fill="none" stroke="#ddd" stroke-width="1"/></svg></span><i class="c">渐</i><i class="c">变</i></div>
<div class="tab" style="left:870px;top:357px;font-size:9.5px"><i class="c">描</i><i class="c">边</i></div>
<div class="a" style="left:897px;top:357px;width:1px;height:13px;background:#353535"></div>
<div class="tab" style="left:896px;top:357px;font-size:9.5px"><i class="c">库</i></div>
<div class="a" style="left:912px;top:357px;width:1px;height:13px;background:#353535"></div>
<div class="tab" style="left:915px;top:357px;font-size:9.5px"><i class="c">图</i><i class="c">形</i><i class="c">样</i><i class="c">式</i></div>
<div class="pm" style="left:971px;top:360px"></div>
<div class="panel" style="left:802px;top:370px;width:184px;height:168px"></div>
<div class="a" style="left:807px;top:376px;width:22px;height:22px;background:linear-gradient(90deg,#fafafa,#8a7e80 55%,#3a2a2c);border:1px solid #333"></div>
<div class="tri-d" style="left:832px;top:386px;border-width:3px 3px 0 3px;border-top-color:#eee"></div>
<div class="t" style="left:845px;top:379px;font-size:10px;color:#dcdcdc"><i class="c">类</i><i class="c">型</i></div>
<div class="t" style="left:866px;top:379px;font-size:9px;color:#999">:</div>
<div class="a" style="left:873px;top:376px;width:108px;height:14px;background:#5b5b5b;border:1px solid #444"></div>
<div class="tri-d" style="left:966px;top:381px;border-width:5px 4px 0 4px;border-top-color:#eee"></div>
<div class="t" style="left:845px;top:399px;font-size:10px;color:#888"><i class="c">描</i><i class="c">边</i></div>
<div class="t" style="left:866px;top:399px;font-size:9px;color:#777">:</div>
<div class="a" style="left:873px;top:397px;width:17px;height:14px;background:#585858;border:1px solid #494949"></div>
<div class="a" style="left:891px;top:397px;width:17px;height:14px;background:#585858;border:1px solid #494949"></div>
<div class="a" style="left:909px;top:397px;width:17px;height:14px;background:#585858;border:1px solid #494949"></div>
<svg class="a" style="left:873px;top:397px" width="54" height="14"><g fill="none" stroke="#777"><path d="M4 12 L4 3 L13 3 M7 12 L7 6 L13 6 L13 9"/><path d="M22 12 L22 3 L31 3 M25 12 L25 6 L31 6"/><path d="M40 12 L40 3 L49 3 M43 12 L43 6 L49 6"/></g></svg>
<div class="a" style="left:814px;top:411px;width:15px;height:15px;background:#fff;border:1px solid #222;overflow:hidden"><div class="a" style="left:3px;top:3px;width:7px;height:7px;background:#222"></div><div class="a" style="left:-4px;top:6px;width:22px;height:2px;background:#d01818;transform:rotate(-45deg)"></div></div>
<div class="a" style="left:806px;top:403px;width:16px;height:16px;background:#c3ed36;border:1px solid #242480"></div>
<svg class="a" style="left:810px;top:430px" width="14" height="12"><g fill="none" stroke="#777"><rect x="2" y="1" width="5" height="3"/><rect x="5" y="7" width="6" height="3"/><path d="M8 2 L12 2 M1 8 L4 8"/></g></svg>
<svg class="a" style="left:852px;top:418px" width="16" height="34"><g fill="none" stroke="#6e6e6e"><path d="M2 11 L12 11 L8 4"/><circle cx="8" cy="27" r="4"/><path d="M2 21 L2 33"/></g></svg>
<div class="a" style="left:873px;top:417px;width:39px;height:14px;background:#6b6b6b;border:1px solid #4a4a4a"></div>
<div class="a" style="left:912px;top:417px;width:12px;height:14px;background:#626262;border:1px solid #4a4a4a"><div class="tri-d" style="left:2px;top:4px;border-width:4px 3.5px 0 3.5px;border-top-color:#999"></div></div>
<div class="a" style="left:873px;top:437px;width:39px;height:14px;background:#6b6b6b;border:1px solid #4a4a4a"></div>
<div class="a" style="left:912px;top:437px;width:12px;height:14px;background:#626262;border:1px solid #4a4a4a"><div class="tri-d" style="left:2px;top:4px;border-width:4px 3.5px 0 3.5px;border-top-color:#999"></div></div>
<div class="a" style="left:809px;top:462px;width:151px;height:15px;background:linear-gradient(90deg,#f4f4f4,#b8b4b5 30%,#8c8285 55%,#4c3c40 85%,#2c1c20);border:1px solid #2a2a2a"></div>
<svg class="a" style="left:966px;top:463px" width="12" height="14"><g fill="none" stroke="#6a6a6a"><path d="M2 3 L10 3 M4 3 L4 1 L8 1 L8 3 M3 4 L3 12 L9 12 L9 4"/></g></svg>
<div class="t" style="left:825px;top:502px;font-size:10px;color:#8a8a8a"><i class="c">不</i><i class="c">透</i><i class="c">明</i><i class="c">度</i></div>
<div class="t" style="left:866px;top:502px;font-size:9px;color:#777">:</div>
<div class="a" style="left:873px;top:499px;width:39px;height:13px;background:#6b6b6b;border:1px solid #4a4a4a"></div>
<div class="a" style="left:912px;top:499px;width:12px;height:13px;background:#626262;border:1px solid #4a4a4a"><div class="tri-d" style="left:2px;top:4px;border-width:4px 3.5px 0 3.5px;border-top-color:#999"></div></div>
<div class="t" style="left:846px;top:522px;font-size:10px;color:#8a8a8a"><i class="c">位</i><i class="c">置</i></div>
<div class="t" style="left:866px;top:522px;font-size:9px;color:#777">:</div>
<div class="a" style="left:873px;top:519px;width:39px;height:13px;background:#6b6b6b;border:1px solid #4a4a4a"></div>
<div class="a" style="left:912px;top:519px;width:12px;height:13px;background:#626262;border:1px solid #4a4a4a"><div class="tri-d" style="left:2px;top:4px;border-width:4px 3.5px 0 3.5px;border-top-color:#999"></div></div>
<!-- panel 5 layers -->
<div class="a" style="left:802px;top:539px;width:184px;height:14px;background:#404040"></div>
<div class="tab on" style="left:802px;top:539px;width:28px;height:14px;line-height:14px;font-size:9.5px"><i class="c">图</i><i class="c">层</i></div>
<div class="tab" style="left:833px;top:539px;font-size:9.5px;height:14px;line-height:14px"><i class="c">画</i><i class="c">板</i></div>
<div class="a" style="left:860px;top:539px;width:1px;height:14px;background:#353535"></div>
<div class="pm" style="left:971px;top:543px"></div>
<!-- WATERMARK -->
<svg class="a" style="left:750px;top:15px" width="235" height="60" viewBox="750 15 235 60">
<g fill="none" stroke="rgba(165,165,165,0.8)" stroke-width="3.6" stroke-linecap="round" stroke-linejoin="round">
<path d="M761 28.5 Q769 28.5 769 36 L769 55 Q769 64.5 778 64.5"/>
<rect x="777" y="28.5" width="51.5" height="36.5" rx="8"/>
<path d="M791.5 33 L814.5 33 M791.5 38.3 L814.5 38.3 M803 30 L803 38.3"/>
<path d="M778.5 49.5 L784 49.5 M778.5 54.5 L784 54.5 M821.5 49.5 L827 49.5 M821.5 54.5 L827 54.5"/>
<!-- 虎 -->
<path d="M851.7 22 L851.7 29 M851.7 24.6 L871 24.6 M835.6 63.5 L835.6 34 Q835.6 30.2 839.6 30.2 L867.5 30.2 Q871.4 30.2 871.4 35 M840.6 38.2 L869.9 38.2 M847.7 33.7 L847.7 41.5 Q847.7 45.3 851.5 45.3 L871.4 45.3 M842.1 64.5 L842.1 55 Q842.1 50.9 846 50.9 L862.5 50.9 Q866.4 50.9 866.4 55 L866.4 60 Q866.4 63.5 870 63.5 L873.5 63.5"/>
<!-- 课 -->
<path d="M883 24.6 L883 29.1 M878.5 35.7 L880 35.7 Q883 35.7 883 39 L883 60 Q883 64.8 889.6 64.8 M897.5 23.1 L916 23.1 Q919.4 23.1 919.4 26.5 L919.4 41 Q919.4 44.3 916 44.3 L897.5 44.3 Q894.2 44.3 894.2 41 L894.2 26.5 Q894.2 23.1 897.5 23.1 Z M894.2 33.7 L919.4 33.7 M906.8 23.1 L906.8 65 M892.6 50.9 L920.4 50.9 M898.7 55.4 L893.7 63.5 M915.9 55.4 L919.4 64"/>
<!-- 网 -->
<path d="M929.4 65.8 L929.4 26 Q929.4 22.4 933 22.4 L964 22.4 Q967.4 22.4 967.4 26 L967.4 61 Q967.4 64.9 963.5 64.9 L960.5 64.9 M933.5 31 L946.5 57 M946.5 31 L933.5 57 M949 31 L963 57 M963 31 L949 57"/>
</g>
<g fill="rgba(165,165,165,0.78)">
<path d="M783.5 29 L788 21 L792.5 29 Z M813.5 29 L818 21 L822.5 29 Z"/>
<path d="M798 45 L798 57 L809.5 51 Z" stroke="rgba(165,165,165,0.78)" stroke-width="1.5" stroke-linejoin="round"/>
</g>
</svg>
</body></html>
